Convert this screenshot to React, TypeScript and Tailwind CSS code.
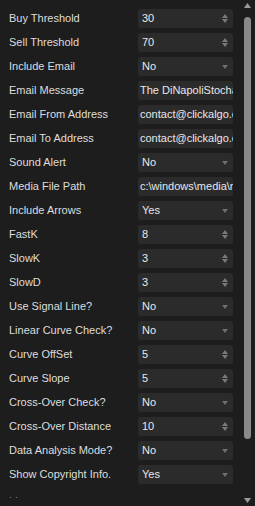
import React from 'react';

type Field = {
  label: string;
  value: string;
  kind: 'number' | 'select' | 'text';
};

const fields: Field[] = [
  { label: 'Buy Threshold', value: '30', kind: 'number' },
  { label: 'Sell Threshold', value: '70', kind: 'number' },
  { label: 'Include Email', value: 'No', kind: 'select' },
  { label: 'Email Message', value: 'The DiNapoliStochastic', kind: 'text' },
  { label: 'Email From Address', value: 'contact@clickalgo.com', kind: 'text' },
  { label: 'Email To Address', value: 'contact@clickalgo.com', kind: 'text' },
  { label: 'Sound Alert', value: 'No', kind: 'select' },
  { label: 'Media File Path', value: 'c:\\windows\\media\\notify.wav', kind: 'text' },
  { label: 'Include Arrows', value: 'Yes', kind: 'select' },
  { label: 'FastK', value: '8', kind: 'number' },
  { label: 'SlowK', value: '3', kind: 'number' },
  { label: 'SlowD', value: '3', kind: 'number' },
  { label: 'Use Signal Line?', value: 'No', kind: 'select' },
  { label: 'Linear Curve Check?', value: 'No', kind: 'select' },
  { label: 'Curve OffSet', value: '5', kind: 'number' },
  { label: 'Curve Slope', value: '5', kind: 'number' },
  { label: 'Cross-Over Check?', value: 'No', kind: 'select' },
  { label: 'Cross-Over Distance', value: '10', kind: 'number' },
  { label: 'Data Analysis Mode?', value: 'No', kind: 'select' },
  { label: 'Show Copyright Info.', value: 'Yes', kind: 'select' },
];

const Tri = ({ up, className }: { up?: boolean; className?: string }) => (
  <svg width="7" height="5" viewBox="0 0 7 5" className={className}>
    <path d={up ? 'M3.5 0 L7 5 L0 5 Z' : 'M0 0 L7 0 L3.5 5 Z'} fill="currentColor" />
  </svg>
);

const SmallTri = ({ up }: { up?: boolean }) => (
  <svg width="6" height="4" viewBox="0 0 6 4">
    <path d={up ? 'M3 0 L6 4 L0 4 Z' : 'M0 0 L6 0 L3 4 Z'} fill="currentColor" />
  </svg>
);

function FieldBox({ field }: { field: Field }) {
  if (field.kind === 'text') {
    return (
      <div className="h-[19px] w-[95px] rounded-[3px] bg-[#2b2b2b] overflow-hidden flex items-center pl-[2px]">
        <span className="whitespace-nowrap text-[11px] text-[#e8e8e8]">{field.value}</span>
      </div>
    );
  }
  return (
    <div className="h-[19px] w-[95px] rounded-[3px] bg-[#2b2b2b] flex items-center justify-between pl-[4px] pr-[5px]">
      <span className="text-[11px] text-[#e8e8e8]">{field.value}</span>
      {field.kind === 'number' ? (
        <div className="flex flex-col gap-[1px] text-[#7a7a7a]">
          <SmallTri up />
          <SmallTri />
        </div>
      ) : (
        <div className="text-[#6e6e6e] pt-[1px]">
          <SmallTri />
        </div>
      )}
    </div>
  );
}

export default function App() {
  return (
    <div
      className="w-[255px] h-[506px] bg-[#1d1d1d] flex overflow-hidden"
      style={{ fontFamily: '"Liberation Sans", Arial, sans-serif' }}
    >
      <div className="flex-1 pl-[9px] pt-[6px] flex flex-col overflow-hidden">
        {fields.map((f) => (
          <div key={f.label} className="h-[24px] flex items-center shrink-0">
            <span className="w-[129px] text-[11px] text-[#dedede] whitespace-nowrap">{f.label}</span>
            <FieldBox field={f} />
          </div>
        ))}
        <div className="flex gap-[5px] pl-[1px] pt-[11px]">
          <span className="w-[1px] h-[1px] bg-[#777]" />
          <span className="w-[1px] h-[1px] bg-[#777]" />
        </div>
      </div>
      <div className="w-[15px] flex flex-col items-center pt-[3px] pb-[3px] text-[#9a9a9a]">
        <Tri up />
        <div className="w-[7px] mt-[9px] h-[422px] rounded-full bg-[#8a8a8a]" />
        <div className="flex-1" />
        <Tri />
      </div>
    </div>
  );
}
